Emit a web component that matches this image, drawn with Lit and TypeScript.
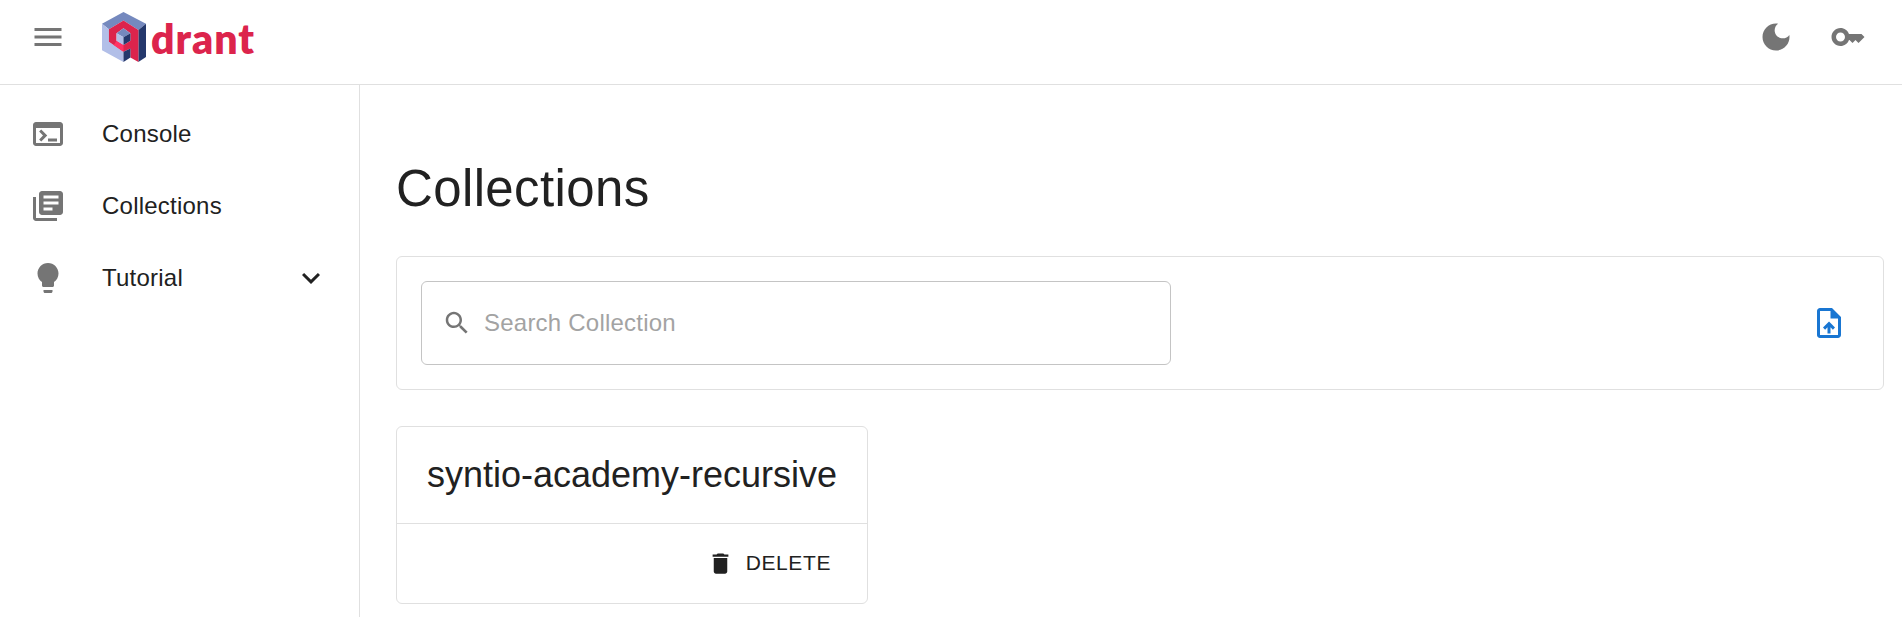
import { LitElement, html, css, svg } from "lit";
import { customElement } from "lit/decorators.js";

const P = {
  menu: "M3 18h18v-2H3v2zm0-5h18v-2H3v2zm0-7v2h18V6H3z",
  moon: "M12 3c-4.97 0-9 4.03-9 9s4.03 9 9 9 9-4.03 9-9c0-.46-.04-.92-.1-1.36-.98 1.37-2.58 2.26-4.4 2.26-2.98 0-5.4-2.42-5.4-5.4 0-1.81.89-3.42 2.26-4.4-.44-.06-.9-.1-1.36-.1z",
  key: "M21 10h-8.35C11.83 7.67 9.61 6 7 6c-3.31 0-6 2.69-6 6s2.69 6 6 6c2.61 0 4.83-1.67 5.65-4H13l2 2 2-2 2 2 4-4.04L21 10zM7 15c-1.65 0-3-1.35-3-3s1.35-3 3-3 3 1.35 3 3-1.35 3-3 3z",
  terminal: "M20 4H4c-1.11 0-2 .9-2 2v12c0 1.1.89 2 2 2h16c1.1 0 2-.9 2-2V6c0-1.1-.9-2-2-2zm0 14H4V8h16v10zm-2-1h-6v-2h6v2zM7.5 17l-1.41-1.41L8.67 13l-2.59-2.59L7.5 9l4 4-4 4z",
  books: "M4 6H2v14c0 1.1.9 2 2 2h14v-2H4V6zm16-4H8c-1.1 0-2 .9-2 2v12c0 1.1.9 2 2 2h12c1.1 0 2-.9 2-2V4c0-1.1-.9-2-2-2zm-1 9H9V9h10v2zm-4 4H9v-2h6v2zm4-8H9V5h10v2z",
  bulb: "M9 21c0 .55.45 1 1 1h4c.55 0 1-.45 1-1v-1H9v1zm3-19C8.14 2 5 5.14 5 9c0 2.38 1.19 4.47 3 5.74V17c0 .55.45 1 1 1h6c.55 0 1-.45 1-1v-2.26c1.81-1.27 3-3.36 3-5.74 0-3.86-3.14-7-7-7z",
  expand: "M16.59 8.59 12 13.17 7.41 8.59 6 10l6 6 6-6z",
  search: "M15.5 14h-.79l-.28-.27C15.41 12.59 16 11.11 16 9.5 16 5.91 13.09 3 9.5 3S3 5.91 3 9.5 5.91 16 9.5 16c1.61 0 3.09-.59 4.23-1.57l.27.28v.79l5 4.99L20.49 19l-4.99-5zm-6 0C7.01 14 5 11.99 5 9.5S7.01 5 9.5 5 14 7.01 14 9.5 11.99 14 9.5 14z",
  upload: "M14 2H6c-1.1 0-1.99.9-1.99 2L4 20c0 1.1.89 2 1.99 2H18c1.1 0 2-.9 2-2V8l-6-6zm4 18H6V4h7v5h5v11zM8 15.01l1.41 1.41L11 14.84V19h2v-4.16l1.59 1.59L16 15.01 12.01 11 8 15.01z",
  trash: "M6 19c0 1.1.9 2 2 2h8c1.1 0 2-.9 2-2V7H6v12zM19 4h-3.5l-1-1h-5l-1 1H5v2h14V4z",
};

const icon = (d: string, cls = "") =>
  html`<svg class="icon ${cls}" viewBox="0 0 24 24" fill="currentColor"><path d=${d}></path></svg>`;

const logo = html`<svg class="mark" viewBox="38 37 127 148" preserveAspectRatio="none">
  ${svg`
  <polygon fill="#7589BE" points="100,37 165,72 143,90 100,62 58,88 38,72"/>
  <polygon fill="#B2BFE8" points="38,72 58,88 58,125 100,155 100,185 38,150"/>
  <polygon fill="#24386C" points="165,72 165,170 143,185 143,90"/>
  <polygon fill="#DC244C" points="100,62 143,90 143,185 120,172 120,122 120,100 100,85 80,100 80,122 100,135 120,122 120,145 100,155 58,125 58,88"/>
  <polygon fill="#FF3364" points="80,122 100,135 100,155 72,135"/>
  <polygon fill="#24386C" points="100,155 120,145 120,172 100,185"/>
  <polygon fill="#7589BE" points="100,85 120,100 100,112 80,100"/>
  <polygon fill="#B2BFE8" points="80,100 100,112 100,135 80,122"/>
  <polygon fill="#24386C" points="120,100 120,122 100,135 100,112"/>
  `}
</svg>`;

@customElement("app-root")
export class AppRoot extends LitElement {
  static styles = css`
    :host {
      display: flex;
      flex-direction: column;
      width: 1902px;
      height: 617px;
      overflow: hidden;
      background: #fff;
      color: #212121;
      font-family: "Liberation Sans", Arial, sans-serif;
    }
    .icon { width: 36px; height: 36px; display: block; flex: none; color: #757575; }

    header {
      height: 85px;
      box-sizing: border-box;
      flex: none;
      display: flex;
      align-items: flex-start;
      border-bottom: 1px solid #e0e0e0;
      padding: 19px 36px 0 30px;
    }
    .brand { display: flex; align-items: flex-end; gap: 5px; margin: -7px 0 0 36px; height: 50px; }
    .mark { width: 44px; height: 50px; display: block; flex: none; }
    .word {
      font-family: "Lato", sans-serif;
      font-weight: 800;
      font-size: 41px;
      line-height: 40px;
      color: #dc244c;
      margin-bottom: 3px;
      letter-spacing: 1px;
    }
    .spacer { flex: 1; }
    .actions { display: flex; gap: 36px; }

    .body { flex: 1; display: flex; min-height: 0; }
    nav {
      width: 360px;
      flex: none;
      box-sizing: border-box;
      border-right: 1px solid #e0e0e0;
      padding-top: 13px;
    }
    .item {
      height: 72px;
      display: flex;
      align-items: center;
      gap: 36px;
      padding: 0 30px;
      font-size: 24px;
      letter-spacing: 0.225px;
    }
    .item .grow { flex: 1; }
    .item .icon.dark { color: #212121; }

    main { flex: 1; min-width: 0; padding: 0 18px 0 36px; }
    h1 {
      margin: 74px 0 0;
      font-weight: 400;
      font-size: 51px;
      line-height: 60px;
      letter-spacing: 0.375px;
      color: #212121;
    }
    .panel {
      margin-top: 37px;
      height: 134px;
      box-sizing: border-box;
      border: 1px solid #e0e0e0;
      border-radius: 6px;
      display: flex;
      align-items: center;
      justify-content: space-between;
      padding: 0 24px;
    }
    .field {
      width: 750px;
      height: 84px;
      box-sizing: border-box;
      border: 1px solid #c4c4c4;
      border-radius: 6px;
      display: flex;
      align-items: center;
      gap: 12px;
      padding: 0 12px 0 20px;
    }
    .field .icon { width: 30px; height: 30px; }
    input {
      flex: 1;
      min-width: 0;
      border: 0;
      outline: 0;
      background: none;
      padding: 0;
      font: 400 24px "Liberation Sans", Arial, sans-serif;
      letter-spacing: 0.225px;
      color: #212121;
    }
    input::placeholder { color: #a3a3a3; opacity: 1; }
    .upload { color: #1976d2; margin-right: 12px; }

    .card {
      margin-top: 36px;
      width: 472px;
      height: 178px;
      box-sizing: border-box;
      border: 1px solid #e0e0e0;
      border-radius: 6px;
      display: flex;
      flex-direction: column;
    }
    .name {
      height: 97px;
      box-sizing: border-box;
      flex: none;
      display: flex;
      align-items: center;
      justify-content: center;
      font-size: 36px;
      border-bottom: 1px solid #e0e0e0;
    }
    .foot { flex: 1; display: flex; align-items: center; justify-content: flex-end; padding: 0 36px 0 0; }
    .del {
      display: flex;
      align-items: center;
      gap: 12px;
      font-size: 21px;
      letter-spacing: 0.6px;
      color: #212121;
    }
    .del span { margin-bottom: 2px; }
    .del .icon { width: 27px; height: 27px; color: #212121; }
  `;

  render() {
    return html`
      <header>
        ${icon(P.menu)}
        <div class="brand">${logo}<span class="word">drant</span></div>
        <div class="spacer"></div>
        <div class="actions">${icon(P.moon)}${icon(P.key)}</div>
      </header>
      <div class="body">
        <nav>
          <div class="item">${icon(P.terminal)}<span>Console</span></div>
          <div class="item">${icon(P.books)}<span>Collections</span></div>
          <div class="item">
            ${icon(P.bulb)}<span class="grow">Tutorial</span>${icon(P.expand, "dark")}
          </div>
        </nav>
        <main>
          <h1>Collections</h1>
          <div class="panel">
            <label class="field">
              ${icon(P.search)}
              <input placeholder="Search Collection" />
            </label>
            ${icon(P.upload, "upload")}
          </div>
          <div class="card">
            <div class="name">syntio-academy-recursive</div>
            <div class="foot">
              <div class="del">${icon(P.trash)}<span>DELETE</span></div>
            </div>
          </div>
        </main>
      </div>
    `;
  }
}
